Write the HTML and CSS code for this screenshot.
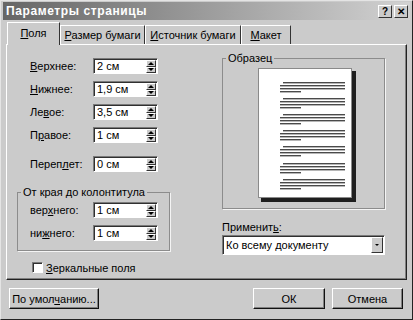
FILE: index.html
```html
<!DOCTYPE html>
<html lang="ru">
<head>
  <meta charset="UTF-8">
  <title>Параметры страницы</title>
  <link rel="stylesheet" href="styles.css">
</head>
<body>
  <div class="dialog">
    <div class="titlebar">
      <span class="title">Параметры страницы</span>
      <span class="tbtn">?</span>
      <span class="tbtn">✕</span>
    </div>

    <div class="tabs">
      <div class="tab active"><u>П</u>оля</div>
      <div class="tab t2"><u>Р</u>азмер бумаги</div>
      <div class="tab t3"><u>И</u>сточник бумаги</div>
      <div class="tab t4"><u>М</u>акет</div>
    </div>

    <div class="panel">
      <div class="left">
        <div class="fields">
          <label><u>В</u>ерхнее:</label>
          <div class="spin"><span class="val">2 см</span><span class="arrows"><span class="up"></span><span class="down"></span></span></div>
          <label><u>Н</u>ижнее:</label>
          <div class="spin"><span class="val">1,9 см</span><span class="arrows"><span class="up"></span><span class="down"></span></span></div>
          <label>Ле<u>в</u>ое:</label>
          <div class="spin"><span class="val">3,5 см</span><span class="arrows"><span class="up"></span><span class="down"></span></span></div>
          <label>П<u>р</u>авое:</label>
          <div class="spin"><span class="val">1 см</span><span class="arrows"><span class="up"></span><span class="down"></span></span></div>
        </div>
        <div class="fields gutter">
          <label>Переп<u>л</u>ет:</label>
          <div class="spin"><span class="val">0 см</span><span class="arrows"><span class="up"></span><span class="down"></span></span></div>
        </div>

        <fieldset class="group">
          <legend>От края до колонтитула</legend>
          <div class="fields inner">
            <label>вер<u>х</u>него:</label>
            <div class="spin"><span class="val">1 см</span><span class="arrows"><span class="up"></span><span class="down"></span></span></div>
            <label>ни<u>ж</u>него:</label>
            <div class="spin"><span class="val">1 см</span><span class="arrows"><span class="up"></span><span class="down"></span></span></div>
          </div>
        </fieldset>

        <div class="check">
          <span class="box"></span>
          <span><u>З</u>еркальные поля</span>
        </div>
      </div>

      <div class="right">
        <fieldset class="sample">
          <legend>Образец</legend>
          <svg class="page" width="98" height="134" viewBox="0 0 98 134">
            <rect x="3" y="3" width="95" height="131" fill="#1e1e1e"/>
            <rect x="0.5" y="0.5" width="93" height="129" fill="#fff" stroke="#8a8a8a"/>
            <g fill="#4a4a4a">
              <rect x="25" y="14" width="62" height="1.4"/><rect x="22" y="17" width="65" height="1.4"/><rect x="22" y="20" width="65" height="1.4"/><rect x="22" y="23" width="21" height="1.4"/>
              <rect x="25" y="30" width="62" height="1.4"/><rect x="22" y="33" width="65" height="1.4"/><rect x="22" y="36" width="65" height="1.4"/><rect x="22" y="39" width="21" height="1.4"/>
              <rect x="25" y="46" width="62" height="1.4"/><rect x="22" y="49" width="65" height="1.4"/><rect x="22" y="52" width="65" height="1.4"/><rect x="22" y="55" width="21" height="1.4"/>
              <rect x="25" y="62" width="62" height="1.4"/><rect x="22" y="65" width="65" height="1.4"/><rect x="22" y="68" width="65" height="1.4"/><rect x="22" y="71" width="21" height="1.4"/>
              <rect x="25" y="78" width="62" height="1.4"/><rect x="22" y="81" width="65" height="1.4"/><rect x="22" y="84" width="65" height="1.4"/><rect x="22" y="87" width="21" height="1.4"/>
              <rect x="25" y="95" width="62" height="1.4"/><rect x="22" y="98" width="65" height="1.4"/><rect x="22" y="101" width="65" height="1.4"/><rect x="22" y="104" width="21" height="1.4"/>
              <rect x="25" y="111" width="62" height="1.4"/><rect x="22" y="114" width="65" height="1.4"/><rect x="22" y="117" width="65" height="1.4"/><rect x="22" y="120" width="21" height="1.4"/>
            </g>
          </svg>
        </fieldset>
        <div class="apply-label">Применит<u>ь</u>:</div>
        <div class="select">
          <span class="value">Ко всему документу</span>
          <span class="drop"></span>
        </div>
      </div>
    </div>

    <div class="footer">
      <button class="btn defaults">По умол<u>ч</u>анию...</button>
      <button class="btn ok">ОК</button>
      <button class="btn cancel">Отмена</button>
    </div>
  </div>
</body>
</html>
```

FILE: styles.css
```css
body{
  margin: 0;
  width: 413px;
  height: 320px;
  overflow: hidden;
  background-color: #cbcbcb;
  font-family: "Liberation Sans", Arial, sans-serif;
  font-size: 11px;
  color: #000;
}
.dialog{
  width: 413px;
  height: 320px;
  box-sizing: border-box;
  border: 1px solid;
  border-color: #e4e4e4 #222 #222 #e4e4e4;
  padding: 1px 2px 0 2px;
}
.titlebar{
  height: 18px;
  display: flex;
  align-items: center;
  padding: 0 2px 0 3px;
  background: linear-gradient(to right, #666, #d2d2d2);
}
.title{
  flex: 1;
  color: #fff;
  font-weight: bold;
  font-size: 12px;
  letter-spacing: 0.6px;
}
.tbtn{
  width: 12px;
  height: 11px;
  margin-left: 2px;
  background-color: #cbcbcb;
  border: 1px solid;
  border-color: #fff #333 #333 #fff;
  font-size: 10px;
  font-weight: bold;
  line-height: 11px;
  text-align: center;
}

/* tabs */
.tabs{
  display: flex;
  align-items: flex-end;
  height: 22px;
  margin: 2px 0 0 4px;
  position: relative;
  z-index: 1;
}
.tab{
  height: 19px;
  box-sizing: border-box;
  border: 1px solid;
  border-color: #fff #333 transparent #fff;
  border-bottom: none;
  text-align: center;
  line-height: 18px;
}
.tab.active{
  width: 53px;
  height: 23px;
  margin-bottom: -1px;
  background-color: #cbcbcb;
  line-height: 20px;
}
.t2{ width: 85px; }
.t3{ width: 96px; }
.t4{ width: 50px; }

.panel{
  height: 236px;
  box-sizing: border-box;
  margin: 0 3px;
  border: 1px solid;
  border-color: #fff #222 #222 #fff;
  box-shadow: inset -1px -1px 0 #808080;
  display: flex;
}
.left{
  width: 200px;
  padding: 13px 0 0 10px;
  box-sizing: border-box;
}
.fields{
  display: grid;
  grid-template-columns: 63px 65px;
  grid-auto-rows: 16px;
  row-gap: 7px;
  align-items: center;
  margin-left: 13px;
}
.gutter{
  margin-top: 13px;
}
.fields.inner{
  margin-left: 12px;
}

/* spin boxes */
.spin{
  height: 16px;
  box-sizing: border-box;
  display: flex;
  background-color: #fff;
  border: 1px solid;
  border-color: #7a7a7a #fff #fff #7a7a7a;
  box-shadow: inset 1px 1px 0 #303030;
}
.val{
  flex: 1;
  padding: 1px 0 0 3px;
  line-height: 13px;
}
.arrows{
  width: 10px;
  display: flex;
  flex-direction: column;
  padding: 1px 1px 0 0;
}
.up, .down{
  flex: 1;
  display: flex;
  align-items: center;
  justify-content: center;
  background-color: #cbcbcb;
  border: 1px solid;
  border-color: #fff #333 #333 #fff;
}
.up::after{
  content: "";
  border-left: 3px solid transparent;
  border-right: 3px solid transparent;
  border-bottom: 3px solid #000;
}
.down::after{
  content: "";
  border-left: 3px solid transparent;
  border-right: 3px solid transparent;
  border-top: 3px solid #000;
}

/* group frames */
fieldset{
  margin: 0;
  min-width: 0;
  border: 1px solid #8c8c8c;
  box-shadow: 1px 1px 0 #f4f4f4;
}
legend{
  margin-left: 3px;
  padding: 0 2px;
  line-height: 13px;
}
.group{
  width: 153px;
  box-sizing: border-box;
  margin-top: 14px;
  padding: 3px 0 9px 0;
}
.check{
  display: flex;
  align-items: center;
  margin-top: 11px;
  padding-left: 15px;
  height: 11px;
}
.box{
  width: 11px;
  height: 11px;
  box-sizing: border-box;
  margin-right: 3px;
  background-color: #fff;
  border: 1px solid;
  border-color: #7a7a7a #fff #fff #7a7a7a;
  box-shadow: inset 1px 1px 0 #303030;
}

.right{
  width: 163px;
  margin-left: 15px;
  padding-top: 7px;
}
.sample{
  height: 157px;
  box-sizing: border-box;
  padding: 3px 0 0 0;
}
.page{
  display: block;
  margin-left: 35px;
}
.apply-label{
  margin-top: 12px;
  line-height: 13px;
}
.select{
  height: 20px;
  box-sizing: border-box;
  margin-top: 1px;
  display: flex;
  background-color: #fff;
  border: 1px solid;
  border-color: #7a7a7a #fff #fff #7a7a7a;
  box-shadow: inset 1px 1px 0 #303030;
}
.select .value{
  flex: 1;
  padding: 3px 0 0 3px;
}
.drop{
  width: 10px;
  margin: 1px 1px 1px 0;
  display: flex;
  align-items: center;
  justify-content: center;
  background-color: #cbcbcb;
  border: 1px solid;
  border-color: #fff #333 #333 #fff;
}
.drop::after{
  content: "";
  border-left: 2px solid transparent;
  border-right: 2px solid transparent;
  border-top: 2px solid #000;
}

/* bottom buttons */
.footer{
  display: flex;
  margin: 8px 7px 0 6px;
}
.btn{
  height: 21px;
  padding: 0;
  background-color: #cbcbcb;
  border: 1px solid;
  border-color: #fff #111 #111 #fff;
  box-shadow: inset -1px -1px 0 #808080;
  font-family: "Liberation Sans", Arial, sans-serif;
  font-size: 11px;
  color: #000;
}
.defaults{ width: 90px; }
.ok{ width: 72px; margin-left: auto; }
.cancel{ width: 71px; margin-left: 7px; }
```
